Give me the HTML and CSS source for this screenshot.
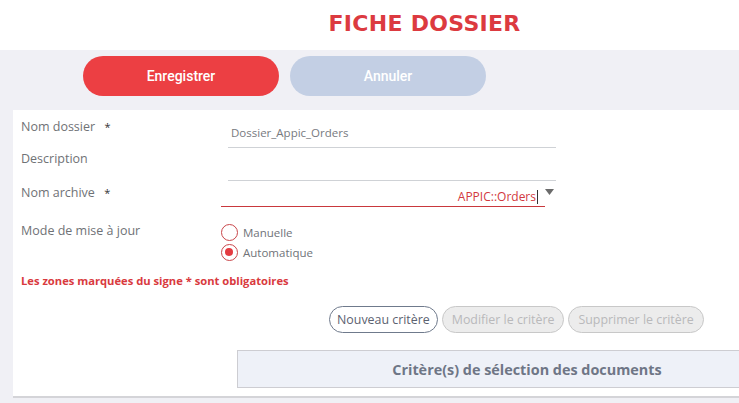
FILE: index.html
```html
<!DOCTYPE html>
<html lang="fr">
<head>
<meta charset="utf-8">
<title>Fiche dossier</title>
<link rel="stylesheet" href="styles.css">
</head>
<body>
<header class="top">
  <h1 class="title">FICHE DOSSIER</h1>
</header>
<main class="main">
  <div class="actions">
    <button class="btn btn-save">Enregistrer</button>
    <button class="btn btn-cancel">Annuler</button>
  </div>
  <section class="panel">
    <div class="form">
      <div class="row row1">
        <div class="label">Nom dossier <span class="star">*</span></div>
        <div class="field"><div class="input">Dossier_Appic_Orders</div></div>
      </div>
      <div class="row row2">
        <div class="label">Description</div>
        <div class="field"><div class="input"></div></div>
      </div>
      <div class="row row3">
        <div class="label">Nom archive <span class="star">*</span></div>
        <div class="field select-wrap">
          <div class="select"><span>APPIC::Orders</span><span class="caret"></span></div>
          <svg class="arrow" width="9" height="6" viewBox="0 0 9 6"><path d="M0 0 H9 L4.5 6 Z" fill="#6b6b6b"/></svg>
        </div>
      </div>
      <div class="row row4">
        <div class="label">Mode de mise à jour</div>
        <div class="radios">
          <label class="radio"><span class="dot"></span>Manuelle</label>
          <label class="radio checked"><span class="dot"></span>Automatique</label>
        </div>
      </div>
    </div>
    <p class="mandatory">Les zones marquées du signe * sont obligatoires</p>
    <div class="crit-actions">
      <button class="pill">Nouveau critère</button>
      <button class="pill disabled">Modifier le critère</button>
      <button class="pill disabled">Supprimer le critère</button>
    </div>
    <div class="crit-box">Critère(s) de sélection des documents</div>
  </section>
</main>
</body>
</html>
```

FILE: styles.css
```css
* { box-sizing: border-box; }
html, body { margin: 0; padding: 0; }
body {
  width: 739px;
  height: 403px;
  overflow: hidden;
  background: #f0f0f5;
  font-family: "Open Sans", "Liberation Sans", sans-serif;
  color: #6a6d72;
}
.top {
  height: 50px;
  background: #ffffff;
  display: flex;
  justify-content: center;
  align-items: center;
  padding-left: 110px;
}
.title {
  margin: 0;
  font-family: "DejaVu Sans", sans-serif;
  font-weight: 700;
  font-size: 22px;
  color: #dc3a40;
  letter-spacing: 0.3px;
  line-height: 1;
  padding-bottom: 2px;
}
.main {
  padding: 6px 0 0 13px;
}
.actions {
  display: flex;
  gap: 11px;
  margin-left: 70px;
  height: 40px;
}
.btn {
  width: 196px;
  height: 40px;
  border: none;
  border-radius: 20px;
  color: #ffffff;
  font-family: Roboto, sans-serif;
  font-weight: 500;
  font-size: 14px;
  padding: 0;
}
.btn-save { background: #ec3f43; }
.btn-cancel { background: #c3cfe4; }
.panel {
  margin-top: 14px;
  background: #ffffff;
  height: 288px;
  border-bottom: 2px solid #d4d4d8;
  padding-left: 8px;
  overflow: hidden;
}
.row {
  display: grid;
  grid-template-columns: 200px 1fr;
  font-size: 12.5px;
}
.label {
  line-height: 18px;
  color: #6f7276;
}
.star { margin-left: 6px; color: #333; font-size: 11px; }
.row1 { height: 38px; }
.row1 .label { padding-top: 8px; }
.row2 { height: 33px; }
.row2 .label { padding-top: 2px; }
.row3 { height: 26px; }
.row3 .label { padding-top: 3px; }
.field { display: flex; align-items: flex-end; }
.input {
  margin-left: 7px;
  width: 328px;
  height: 24px;
  border-bottom: 1px solid #cfd2d6;
  padding-left: 3px;
  line-height: 18px;
  font-size: 11.5px;
  color: #777a80;
}
.select-wrap { position: relative; }
.select {
  width: 324px;
  height: 25px;
  border-bottom: 1px solid #c9383d;
  display: flex;
  justify-content: flex-end;
  align-items: center;
  padding-top: 5px;
  padding-right: 7px;
  font-size: 12px;
  color: #d2393e;
}
.caret {
  display: inline-block;
  width: 1px;
  height: 14px;
  background: #333;
  margin-left: 1px;
}
.arrow {
  position: absolute;
  left: 324px;
  top: 8px;
}
.row4 { margin-top: 15px; }
.row4 .label { padding-top: 0; }
.radios { display: flex; flex-direction: column; gap: 2px; margin-top: 1px; }
.radio {
  display: flex;
  align-items: center;
  gap: 5px;
  height: 18px;
  font-size: 11.5px;
  color: #707379;
}
.dot {
  width: 17px;
  height: 17px;
  border: 1.5px solid #c9464a;
  border-radius: 50%;
  background: #fff;
  position: relative;
}
.radio.checked .dot::after {
  content: "";
  position: absolute;
  left: 3px;
  top: 3px;
  width: 8px;
  height: 8px;
  border-radius: 50%;
  background: #e43a40;
}
.mandatory {
  margin: 13px 0 0 0;
  font-size: 11.2px;
  font-weight: 700;
  color: #d93a3e;
  line-height: 14px;
}
.crit-actions {
  display: flex;
  gap: 4px;
  margin: 18px 0 0 308px;
}
.pill {
  height: 27px;
  border-radius: 14px;
  border: 1px solid #6f7a8c;
  background: #ffffff;
  color: #5b6270;
  font-family: "Open Sans", sans-serif;
  font-size: 12.4px;
  padding: 0 7px;
  white-space: nowrap;
}
.pill.disabled {
  background: #ececec;
  border-color: #c8c8c8;
  color: #b9b9bb;
  padding: 0 9px;
}
.crit-box {
  margin: 17px 0 0 216px;
  width: 580px;
  height: 38px;
  background: #eef1f8;
  border: 1px solid #cdcdd2;
  display: flex;
  align-items: center;
  justify-content: center;
  font-weight: 700;
  font-size: 14.4px;
  color: #6e7686;
}
```
